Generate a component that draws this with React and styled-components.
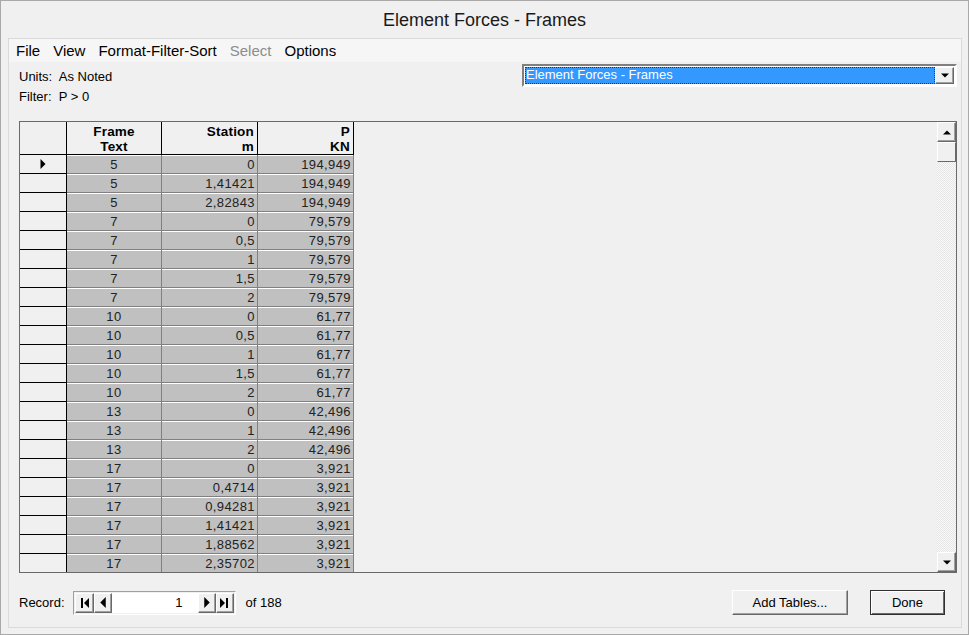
import React from "react";
import styled, { createGlobalStyle } from "styled-components";

const GlobalStyle = createGlobalStyle`
  html, body {
    margin: 0;
    padding: 0;
    background: #f0f0f0;
  }
  * {
    box-sizing: border-box;
  }
`;

const Window = styled.div`
  width: 969px;
  height: 635px;
  display: flex;
  flex-direction: column;
  background: #f0f0f0;
  border: 1px solid #a9a9a9;
  font-family: "Liberation Sans", Arial, sans-serif;
  color: #000;
`;

const TitleBar = styled.div`
  height: 37px;
  display: flex;
  align-items: center;
  justify-content: center;
  font-size: 18px;
  padding-top: 1px;
  color: #1a1a1a;
`;

const Client = styled.div`
  flex: 1;
  margin: 0 6px 6px 7px;
  border: 1px solid #dadada;
  display: flex;
  flex-direction: column;
  background: #f0f0f0;
`;

const MenuBar = styled.div`
  height: 23px;
  display: flex;
  align-items: center;
  gap: 13px;
  padding-left: 7px;
  background: #f6f6f6;
  font-size: 15px;
`;

const MenuItem = styled.span`
  color: ${(p) => (p.disabled ? "#8d8d8d" : "#000")};
`;

const InfoRow = styled.div`
  display: flex;
  justify-content: space-between;
  padding: 2px 4px 0 10px;
  height: 59px;
`;

const InfoText = styled.div`
  display: flex;
  flex-direction: column;
  gap: 5px;
  font-size: 13px;
  padding-top: 5px;
  line-height: 15px;
`;

const Combo = styled.div`
  width: 435px;
  height: 23px;
  display: flex;
  border: 2px solid;
  border-color: #808080 #fff #fff #808080;
  background: #fff;
  padding: 1px;
`;

const ComboValue = styled.div`
  flex: 1;
  background: #3399ff;
  color: #fff;
  font-size: 13px;
  line-height: 15px;
  padding-left: 1px;
  outline: 1px dotted #333;
  outline-offset: -1px;
`;

const ArrowButton = styled.div`
  width: ${(p) => p.w || 18}px;
  height: ${(p) => p.h || 18}px;
  display: flex;
  align-items: center;
  justify-content: center;
  background: #f0f0f0;
  border: 1px solid;
  border-color: #fff #696969 #696969 #fff;
  box-shadow: inset -1px -1px 0 #a0a0a0;
  flex-shrink: 0;
`;

const GridFrame = styled.div`
  margin: 0 4px 0 10px;
  height: 452px;
  border: 1px solid #696969;
  display: flex;
  background: #f0f0f0;
`;

const GridArea = styled.div`
  flex: 1;
  overflow: hidden;
`;

const Grid = styled.div`
  display: grid;
  grid-template-columns: 47px 95px 96px 96px;
  grid-template-rows: 33px;
  grid-auto-rows: 19px;
  width: max-content;
  font-size: 13px;
  letter-spacing: 0.4px;
`;

const HeadCell = styled.div`
  background: #f0f0f0;
  border-right: 1px solid #000;
  border-bottom: 1px solid #000;
  display: flex;
  flex-direction: column;
  justify-content: center;
  align-items: ${(p) => (p.center ? "center" : "flex-end")};
  padding: 1px 3px 0;
  font-weight: bold;
  font-size: 13.5px;
  line-height: 15px;
  letter-spacing: 0.2px;
`;

const SelectorCell = styled.div`
  background: #f0f0f0;
  border-right: 1px solid #000;
  border-bottom: 1px solid #000;
  display: flex;
  align-items: center;
  justify-content: center;
`;

const Cell = styled.div`
  background: #c0c0c0;
  border-right: 1px solid #808080;
  border-bottom: 1px solid #808080;
  box-shadow: inset 0 1px 0 #ffffff;
  display: flex;
  align-items: center;
  justify-content: ${(p) => (p.center ? "center" : "flex-end")};
  padding: 1px 2px 0;
  color: #222;
`;

const ScrollBar = styled.div`
  width: 19px;
  display: flex;
  flex-direction: column;
  background-color: #f4f4f4;
  background-image: repeating-conic-gradient(#e4e4e4 0 25%, #fafafa 0 50%);
  background-size: 2px 2px;
`;

const Thumb = styled.div`
  height: 20px;
  background: #f0f0f0;
  border: 1px solid;
  border-color: #fff #696969 #696969 #fff;
`;

const Spacer = styled.div`
  flex: 1;
`;

const Footer = styled.div`
  flex: 1;
  display: flex;
  align-items: center;
  padding: 5px 16px 0 10px;
  font-size: 13px;
`;

const Navigator = styled.div`
  display: flex;
  align-items: center;
  height: 24px;
  margin-left: 8px;
  border: 1px solid;
  border-color: #a0a0a0 #fff #fff #a0a0a0;
  padding: 1px;
  background: #f0f0f0;
`;

const NavInput = styled.div`
  width: 86px;
  height: 20px;
  background: #fff;
  font-size: 13px;
  text-align: right;
  padding-right: 15px;
  line-height: 20px;
`;

const OfText = styled.span`
  margin-left: 10px;
`;

const Button = styled.div`
  width: ${(p) => p.w}px;
  height: 25px;
  display: flex;
  align-items: center;
  justify-content: center;
  background: #f0f0f0;
  font-size: 13px;
  border: 1px solid;
  border-color: ${(p) =>
    p.primary ? "#303030 #303030 #303030 #303030" : "#fff #696969 #696969 #fff"};
  box-shadow: ${(p) =>
    p.primary
      ? "inset 1px 1px 0 #fff, inset -1px -1px 0 #696969"
      : "inset -1px -1px 0 #a0a0a0"};
  margin-left: ${(p) => p.gap || 0}px;
`;

const Tri = ({ dir = "down", size = 7 }) => {
  const pts = {
    down: "0,0 8,0 4,4",
    up: "0,4 8,4 4,0",
    right: "0,0 4,4 0,8",
    left: "4,0 0,4 4,8",
  }[dir];
  const vert = dir === "down" || dir === "up";
  return (
    <svg
      width={vert ? size + 1 : Math.ceil(size / 2) + 1}
      height={vert ? Math.ceil(size / 2) + 1 : size + 1}
      viewBox={vert ? "0 0 8 4" : "0 0 4 8"}
    >
      <polygon points={pts} fill="#000" />
    </svg>
  );
};

const EndIcon = ({ dir }) => (
  <svg width="9" height="10" viewBox="0 0 9 10">
    {dir === "first" ? (
      <>
        <rect x="1" y="0" width="2" height="10" fill="#000" />
        <polygon points="9,0 4,5 9,10" fill="#000" />
      </>
    ) : (
      <>
        <rect x="6" y="0" width="2" height="10" fill="#000" />
        <polygon points="0,0 5,5 0,10" fill="#000" />
      </>
    )}
  </svg>
);

const rows = [
  ["5", "0", "194,949"],
  ["5", "1,41421", "194,949"],
  ["5", "2,82843", "194,949"],
  ["7", "0", "79,579"],
  ["7", "0,5", "79,579"],
  ["7", "1", "79,579"],
  ["7", "1,5", "79,579"],
  ["7", "2", "79,579"],
  ["10", "0", "61,77"],
  ["10", "0,5", "61,77"],
  ["10", "1", "61,77"],
  ["10", "1,5", "61,77"],
  ["10", "2", "61,77"],
  ["13", "0", "42,496"],
  ["13", "1", "42,496"],
  ["13", "2", "42,496"],
  ["17", "0", "3,921"],
  ["17", "0,4714", "3,921"],
  ["17", "0,94281", "3,921"],
  ["17", "1,41421", "3,921"],
  ["17", "1,88562", "3,921"],
  ["17", "2,35702", "3,921"],
];

export default function App() {
  return (
    <>
      <GlobalStyle />
      <Window>
        <TitleBar>Element Forces - Frames</TitleBar>
        <Client>
          <MenuBar>
            <MenuItem>File</MenuItem>
            <MenuItem>View</MenuItem>
            <MenuItem>Format-Filter-Sort</MenuItem>
            <MenuItem disabled>Select</MenuItem>
            <MenuItem>Options</MenuItem>
          </MenuBar>
          <InfoRow>
            <InfoText>
              <span>Units:&nbsp; As Noted</span>
              <span>Filter:&nbsp; P &gt; 0</span>
            </InfoText>
            <Combo>
              <ComboValue>Element Forces - Frames</ComboValue>
              <ArrowButton w={19} h={17}>
                <Tri dir="down" />
              </ArrowButton>
            </Combo>
          </InfoRow>
          <GridFrame>
            <GridArea>
              <Grid>
                <HeadCell />
                <HeadCell center>
                  <span>Frame</span>
                  <span>Text</span>
                </HeadCell>
                <HeadCell>
                  <span>Station</span>
                  <span>m</span>
                </HeadCell>
                <HeadCell>
                  <span>P</span>
                  <span>KN</span>
                </HeadCell>
                {rows.map((r, i) => (
                  <React.Fragment key={i}>
                    <SelectorCell>
                      {i === 0 && <Tri dir="right" size={9} />}
                    </SelectorCell>
                    <Cell center>{r[0]}</Cell>
                    <Cell>{r[1]}</Cell>
                    <Cell>{r[2]}</Cell>
                  </React.Fragment>
                ))}
              </Grid>
            </GridArea>
            <ScrollBar>
              <ArrowButton w={19} h={20}>
                <Tri dir="up" />
              </ArrowButton>
              <Thumb />
              <Spacer />
              <ArrowButton w={19} h={20}>
                <Tri dir="down" />
              </ArrowButton>
            </ScrollBar>
          </GridFrame>
          <Footer>
            <span>Record:</span>
            <Navigator>
              <ArrowButton w={19} h={20}>
                <EndIcon dir="first" />
              </ArrowButton>
              <ArrowButton w={18} h={20}>
                <Tri dir="left" size={10} />
              </ArrowButton>
              <NavInput>1</NavInput>
              <ArrowButton w={18} h={20}>
                <Tri dir="right" size={10} />
              </ArrowButton>
              <ArrowButton w={18} h={20}>
                <EndIcon dir="last" />
              </ArrowButton>
            </Navigator>
            <OfText>of 188</OfText>
            <Spacer />
            <Button w={116}>Add Tables...</Button>
            <Button w={75} gap={22} primary>
              Done
            </Button>
          </Footer>
        </Client>
      </Window>
    </>
  );
}
